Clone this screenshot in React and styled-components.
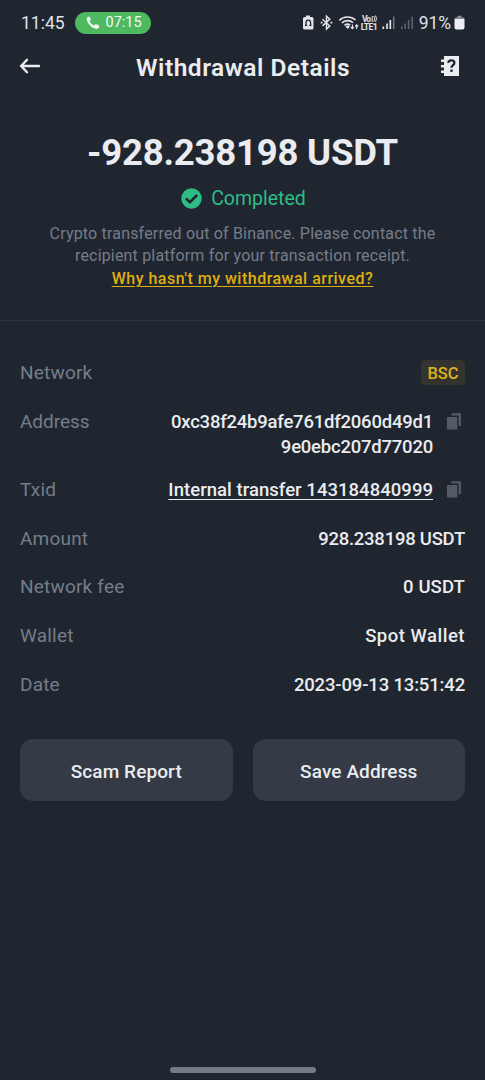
import React from "react";
import styled, { createGlobalStyle } from "styled-components";

const GlobalStyle = createGlobalStyle`
  * {
    box-sizing: border-box;
  }

  body {
    margin: 0;
    background: #202630;
    color: #eaecef;
    font-family: Roboto, "Noto Sans", sans-serif;
  }
`;

const Screen = styled.main`
  display: flex;
  flex-direction: column;
  width: 485px;
  height: 1080px;
  overflow: hidden;
  background: #202630;
`;

const StatusBar = styled.div`
  display: flex;
  align-items: center;
  justify-content: space-between;
  height: 45px;
  padding: 0 20px 0 21px;
`;

const StatusGroup = styled.div`
  display: flex;
  align-items: center;
`;

const Clock = styled.span`
  font-size: 17.5px;
  line-height: 22px;
  color: #dfe2e8;
`;

const BatteryLevel = styled(Clock)`
  margin: 0 3px 0 6px;
  letter-spacing: -0.1px;
`;

const CallPill = styled.div`
  display: flex;
  align-items: center;
  justify-content: space-between;
  width: 76px;
  height: 22px;
  margin-left: 10px;
  padding: 0 9px 0 11px;
  border-radius: 11px;
  background: #4fb960;
  color: #f3faf4;
  font-size: 14.5px;
`;

const Header = styled.header`
  display: grid;
  grid-template-columns: 24px 1fr 24px;
  align-items: center;
  height: 45px;
  padding: 0 22px 0 18px;

  svg {
    margin-bottom: 3px;
  }
`;

const Title = styled.h1`
  margin: 0;
  padding-left: 5px;
  font-size: 24.5px;
  font-weight: 600;
  line-height: 32px;
  letter-spacing: 0.52px;
  text-align: center;
  white-space: nowrap;
`;

const Summary = styled.section`
  display: flex;
  flex-direction: column;
  align-items: center;
  height: 231px;
  padding-top: 40px;
  border-bottom: 1px solid #2d343f;
`;

const Total = styled.div`
  font-size: 36.5px;
  font-weight: 700;
  line-height: 46px;
  letter-spacing: -0.2px;
  white-space: nowrap;
`;

const Status = styled.div`
  display: flex;
  align-items: center;
  gap: 9px;
  height: 26px;
  margin-top: 9px;
  padding-left: 2px;
  color: #2ebd85;
  font-size: 19.5px;
`;

const Note = styled.p`
  margin: 12px 0 0;
  color: #767d89;
  font-size: 16px;
  line-height: 22px;
  letter-spacing: 0.18px;
  text-align: center;
`;

const NoteLine = styled.span`
  display: block;
  white-space: nowrap;
`;

const HelpLink = styled.a`
  margin-top: 1px;
  color: #dfae12;
  font-size: 16px;
  font-weight: 500;
  line-height: 22px;
  letter-spacing: 0.49px;
  text-decoration: underline;
  text-decoration-thickness: 1px;
  text-underline-offset: 2px;
  white-space: nowrap;
`;

const Details = styled.dl`
  display: flex;
  flex-direction: column;
  gap: 23.6px;
  margin: 0;
  padding: 40px 20px 0;
`;

const Row = styled.div`
  display: flex;
  justify-content: space-between;
  height: ${(props) => (props.$tall ? "45px" : "25px")};
  line-height: 25px;
`;

const Label = styled.dt`
  color: #767d89;
  font-size: 19px;
  line-height: 24px;
  letter-spacing: ${(props) => props.$spacing || "0.2px"};
`;

const Value = styled.dd`
  display: flex;
  gap: 14px;
  margin: 0;
  font-size: 18.5px;
  font-weight: 500;
  text-align: right;
  white-space: nowrap;
`;

const Text = styled.span`
  display: block;
  letter-spacing: ${(props) => props.$spacing || "0"};
  text-decoration: ${(props) => (props.$underline ? "underline" : "none")};
  text-decoration-thickness: 1px;
  text-underline-offset: 3px;
`;

const Tag = styled.span`
  width: 44px;
  height: 25px;
  margin-top: -1px;
  border-radius: 4px;
  background: #35332d;
  color: #dcb120;
  font-size: 16.5px;
  font-weight: 500;
  line-height: 27px;
  text-align: center;
`;

const Actions = styled.div`
  display: flex;
  gap: 20px;
  padding: 41.5px 20px 0;
`;

const Button = styled.button`
  flex: 1;
  height: 62px;
  padding: 3px 0 0;
  border: 0;
  border-radius: 13px;
  background: #343a46;
  color: #eaecef;
  font-family: inherit;
  font-size: 19px;
  font-weight: 500;
  letter-spacing: 0.1px;
`;

const HomeBar = styled.div`
  width: 146px;
  height: 6px;
  margin: auto auto 7px;
  border-radius: 3px;
  background: #757b84;
`;

const PhoneIcon = () => (
  <svg width="14" height="14" viewBox="0 0 14 14" fill="#f3faf4">
    <path d="M.8 2.600C.8 1.200 2 .6 3 .7c.9.1 1.200.8 1.500 1.800.3 1.100.3 1.700-.4 2.300-.5.4-.4.8 0 1.400a9 9 0 0 0 2.900 2.800c.6.4 1 .4 1.400 0 .7-.7 1.300-.8 2.400-.5 1.200.3 2.200.8 2.300 1.600.1 1.400-.6 2.800-2.300 2.800C6.500 12.900.8 7.800.8 2.600Z" />
  </svg>
);

const StatusIcons = () => (
  <svg width="111" height="22" viewBox="302 12 111 22" fill="none" stroke="#e0e3e8">
    {/* battery saver */}
    <path d="M306 15.500h4v1.500h2q1.500 0 1.500 1.500v9.500q0 1.500-1.500 1.500h-7.500q-1.500 0-1.500-1.500v-9.500q0-1.500 1.500-1.500h1.500Z" fill="#e0e3e8" stroke="none" />
    <path d="M306 25v-2.500a2.300 2.300 0 0 1 4.600 0V25M305 25.300h2.200M309.300 25.300h2.200" stroke="#202630" strokeWidth="1.200" />
    {/* bluetooth */}
    <path d="m322.500 19.200 7.300 6.700-3.300 3.100V16.200l3.300 3-7.300 6.700" strokeWidth="1.500" />
    <path d="M320.700 22.600h1.800M330.500 22.600h1.800" strokeWidth="1.800" />
    {/* wifi */}
    <path d="M339.300 20.300a12 12 0 0 1 16.200-.3M341.800 22.900a8.400 8.400 0 0 1 11.200-.3M344.500 25.300a5 5 0 0 1 5.700-.3" strokeWidth="1.600" />
    <path d="m345.300 26.500 2.700-1.200 1.800 1.200-2 2.500Z" fill="#e0e3e8" stroke="none" />
    <path d="M352.400 24.500v4m-1.600-1.400 1.600 1.500 1.600-1.500M356.700 29v-4m-1.500 1.400 1.500-1.500 1.500 1.500" strokeWidth="1.200" />
    {/* volte */}
    <text x="362" y="21.900" fontSize="8.500" fontWeight="700" fill="#e0e3e8" stroke="none" textLength="9">Vo</text>
    <path d="M372.200 16v6M373.800 16q1.800 2.800 0 5.500M375.500 15.500q2 3.200 0 6.400" strokeWidth="1" />
    <text x="360.700" y="29.800" fontSize="8.700" fontWeight="700" fill="#e0e3e8" stroke="none" textLength="17">LTE1</text>
    {/* signal, sim 1 and sim 2 */}
    <path d="M383.300 26.500V29M387 23.500V29M390.300 20V29" strokeWidth="1.700" />
    <path d="M393.700 16.500V29" stroke="#747a83" strokeWidth="1.500" />
    <path d="M401.800 26.500V29M405.200 23.500V29M408.600 20V29M412.200 16.500V29" stroke="#5e656f" strokeWidth="1.500" />
  </svg>
);

const BatteryIcon = () => (
  <svg width="11" height="16" viewBox="0 0 11 16">
    <path d="M3.500.8h4v1.500h1Q10.500 2.300 10.500 4H.5q0-1.700 2-1.700h1Z" fill="#858b94" />
    <path d="M.5 4h10v8.500q0 2-2 2h-6q-2 0-2-2Z" fill="#eceef2" />
  </svg>
);

const BackIcon = () => (
  <svg width="24" height="20" viewBox="0 0 24 20" fill="none" stroke="#eaecef" strokeWidth="2.400" strokeLinecap="round">
    <path d="M21 10H4M9 3.800 3.200 10 9 16.200" />
  </svg>
);

const GuideIcon = () => (
  <svg width="24" height="22" viewBox="0 0 24 22" fill="#eaecef">
    <path d="M5 1h15v20H5v-3H2v-2.500h3v-3H2v-2.500h3V7H2V4.500h3Z" />
    <path d="M9.300 7.800q.2-2.500 3.100-2.500 3 0 3 2.500 0 1.500-1.500 2.400-1.400.8-1.400 2.500" fill="none" stroke="#202630" strokeWidth="2.300" />
    <path d="M11.300 14.500h2.400v2.400h-2.400Z" fill="#202630" />
  </svg>
);

const CheckIcon = () => (
  <svg width="21" height="21" viewBox="0 0 21 21" fill="none">
    <circle cx="10.500" cy="10.500" r="10.200" fill="#2ebd85" />
    <path d="m4.900 10.300 4 3.900 7.200-7.200" stroke="#202630" strokeWidth="2.500" />
  </svg>
);

const CopyIcon = () => (
  <svg width="18" height="20" viewBox="0 0 18 20" fill="#535966">
    <path d="M0 7h10.300v12.500H0ZM4.300 3.200H14V16h-2.400V5.600H4.300Z" />
  </svg>
);

const App = () => {
  return (
    <Screen>
      <GlobalStyle />
      <StatusBar>
        <StatusGroup>
          <Clock>11:45</Clock>
          <CallPill>
            <PhoneIcon />
            07:15
          </CallPill>
        </StatusGroup>
        <StatusGroup>
          <StatusIcons />
          <BatteryLevel>91%</BatteryLevel>
          <BatteryIcon />
        </StatusGroup>
      </StatusBar>
      <Header>
        <BackIcon />
        <Title>Withdrawal Details</Title>
        <GuideIcon />
      </Header>
      <Summary>
        <Total>-928.238198 USDT</Total>
        <Status>
          <CheckIcon />
          Completed
        </Status>
        <Note>
          <NoteLine>
            Crypto transferred out of Binance. Please contact the
          </NoteLine>
          <NoteLine>recipient platform for your transaction receipt.</NoteLine>
        </Note>
        <HelpLink>Why hasn't my withdrawal arrived?</HelpLink>
      </Summary>
      <Details>
        <Row>
          <Label>Network</Label>
          <Value>
            <Tag>BSC</Tag>
          </Value>
        </Row>
        <Row $tall>
          <Label $spacing="-0.05px">Address</Label>
          <Value>
            <div>
              <Text $spacing="-0.22px">0xc38f24b9afe761df2060d49d1</Text>
              <Text $spacing="-0.22px">9e0ebc207d77020</Text>
            </div>
            <CopyIcon />
          </Value>
        </Row>
        <Row>
          <Label>Txid</Label>
          <Value>
            <Text $underline $spacing="0.04px">
              Internal transfer 143184840999
            </Text>
            <CopyIcon />
          </Value>
        </Row>
        <Row>
          <Label>Amount</Label>
          <Value>
            <Text $spacing="-0.25px">928.238198 USDT</Text>
          </Value>
        </Row>
        <Row>
          <Label>Network fee</Label>
          <Value>
            <Text $spacing="0.1px">0 USDT</Text>
          </Value>
        </Row>
        <Row>
          <Label>Wallet</Label>
          <Value>
            <Text $spacing="0.5px">Spot Wallet</Text>
          </Value>
        </Row>
        <Row>
          <Label>Date</Label>
          <Value>
            <Text $spacing="-0.16px">2023-09-13 13:51:42</Text>
          </Value>
        </Row>
      </Details>
      <Actions>
        <Button>Scam Report</Button>
        <Button>Save Address</Button>
      </Actions>
      <HomeBar />
    </Screen>
  );
};

export default App;
